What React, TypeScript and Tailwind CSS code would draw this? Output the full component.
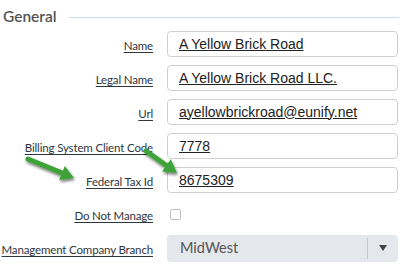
import React from "react";

const labelFont = { fontFamily: "Lato, 'Noto Sans', sans-serif" };
const inputFont = { fontFamily: "'Liberation Sans', Arial, sans-serif" };

function Row({ label, children }: { label: string; children: React.ReactNode }) {
  return (
    <div className="flex items-center h-[26px]">
      <div className="w-[153px] shrink-0 text-right whitespace-nowrap">
        <span
          className="text-[11.5px] tracking-[-0.15px] text-[#2f3640] underline underline-offset-2"
          style={labelFont}
        >
          {label}
        </span>
      </div>
      <div className="ml-[14px] w-[231px]">{children}</div>
    </div>
  );
}

function TextInput({ value }: { value: string }) {
  return (
    <div className="h-[26px] w-full border border-[#cfcfcf] rounded-[4px] bg-white flex items-center px-[11px]">
      <span className="text-[14px] text-[#222] underline underline-offset-1" style={inputFont}>
        {value}
      </span>
    </div>
  );
}

function Arrow({ x1, y1, x2, y2 }: { x1: number; y1: number; x2: number; y2: number }) {
  const dx = x2 - x1;
  const dy = y2 - y1;
  const len = Math.sqrt(dx * dx + dy * dy);
  const ux = dx / len;
  const uy = dy / len;
  const px = -uy;
  const py = ux;
  const headLen = 13;
  const headW = 7.5;
  const bx = x2 - ux * headLen;
  const by = y2 - uy * headLen;
  const pts = `${x2},${y2} ${bx + px * headW},${by + py * headW} ${bx - px * headW},${by - py * headW}`;
  return (
    <g>
      <line x1={x1} y1={y1} x2={bx + ux * 1} y2={by + uy * 1} stroke="#3ea337" strokeWidth="5" strokeLinecap="round" />
      <polygon points={pts} fill="#3ea337" />
    </g>
  );
}

export default function App() {
  return (
    <div className="relative w-[410px] h-[265px] bg-white overflow-hidden">
      <div className="flex items-center pl-[3px] pt-[3px] h-[31px]">
        <span className="text-[15.5px] font-semibold text-[#555]" style={labelFont}>
          General
        </span>
        <div className="ml-[12px] w-[330px] h-px bg-[#c9ddf3]" />
      </div>
      <div className="flex flex-col gap-[8px]">
        <Row label="Name">
          <TextInput value="A Yellow Brick Road" />
        </Row>
        <Row label="Legal Name">
          <TextInput value="A Yellow Brick Road LLC." />
        </Row>
        <Row label="Url">
          <TextInput value="ayellowbrickroad@eunify.net" />
        </Row>
        <Row label="Billing System Client Code">
          <TextInput value="7778" />
        </Row>
        <Row label="Federal Tax Id">
          <TextInput value="8675309" />
        </Row>
        <Row label="Do Not Manage">
          <div className="ml-[3px] w-[11px] h-[11px] border border-[#bdbdbd] rounded-[2px] bg-white" />
        </Row>
        <Row label="Management Company Branch">
          <div className="h-[27px] w-full rounded-[4px] bg-[#e4e7eb] flex items-center">
            <span className="flex-1 pl-[13px] text-[14.5px] text-[#555]" style={labelFont}>
              MidWest
            </span>
            <div className="w-px h-[21px] bg-[#c4c8cc]" />
            <div className="w-[30px] flex items-center justify-center">
              <svg width="8" height="6" viewBox="0 0 8 6">
                <path d="M0 0 L8 0 L4 6 Z" fill="#444" />
              </svg>
            </div>
          </div>
        </Row>
      </div>
      <svg className="absolute left-0 top-0 pointer-events-none" width="410" height="265">
        <defs>
          <filter id="sh" x="-30%" y="-30%" width="160%" height="160%">
            <feGaussianBlur in="SourceAlpha" stdDeviation="1.6" />
            <feOffset dx="1" dy="2" result="b" />
            <feComponentTransfer>
              <feFuncA type="linear" slope="0.55" />
            </feComponentTransfer>
            <feMerge>
              <feMergeNode />
              <feMergeNode in="SourceGraphic" />
            </feMerge>
          </filter>
        </defs>
        <g filter="url(#sh)">
          <Arrow x1={28} y1={159} x2={74} y2={178} />
          <Arrow x1={146} y1={151} x2={177} y2={173} />
        </g>
      </svg>
    </div>
  );
}
